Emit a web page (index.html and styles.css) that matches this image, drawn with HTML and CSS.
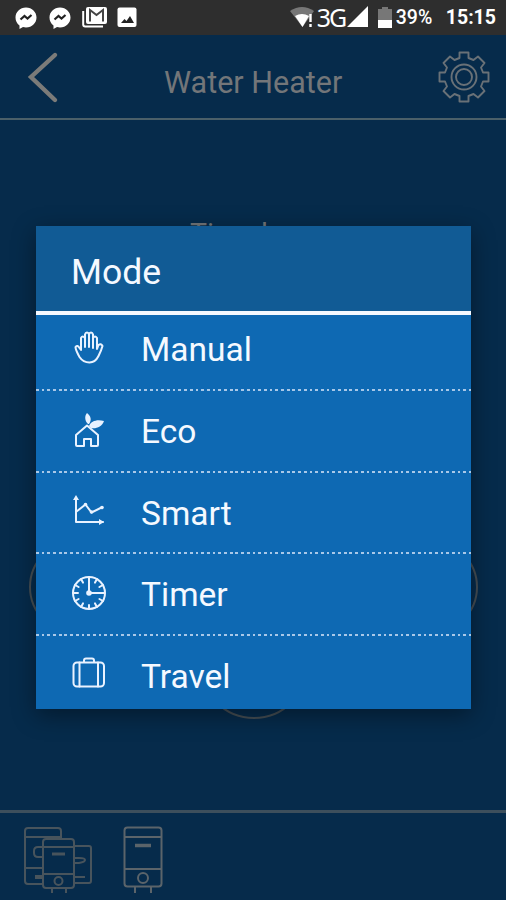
FILE: index.html
```html
<!DOCTYPE html>
<html lang="en">
<head>
  <meta charset="UTF-8" />
  <title>Water Heater</title>
  <link rel="stylesheet" href="styles.css">
</head>
<body>

  <!-- Status bar -->
  <div class="status-bar">
    <div class="notifications">
      <svg width="22" height="23" viewBox="0 0 22 23">
        <path d="M11 0.500C5 .5.5 5 .5 10.500c0 3.500 1.500 6 4 8v3.500l3.500-2c1 .3 2 .5 3 .5 6 0 10.500-4.500 10.500-10S17 .5 11 .5z" fill="#fff"/>
        <path d="M5.500 12.500l4-3.500 3 2.500L16.500 8" fill="none" stroke="#222" stroke-width="2.200"/>
      </svg>
      <svg width="22" height="23" viewBox="0 0 22 23">
        <path d="M11 0.500C5 .5.5 5 .5 10.500c0 3.500 1.500 6 4 8v3.500l3.500-2c1 .3 2 .5 3 .5 6 0 10.500-4.500 10.500-10S17 .5 11 .5z" fill="#fff"/>
        <path d="M5.500 12.500l4-3.500 3 2.500L16.500 8" fill="none" stroke="#222" stroke-width="2.200"/>
      </svg>
      <svg class="mail" width="26" height="22" viewBox="0 0 26 22">
        <path d="M1.200 4v13.500q0 2 2 2H21" fill="none" stroke="#fff" stroke-width="2"/>
        <rect x="4" y="0" width="21" height="17" rx="2" fill="#fff"/>
        <path d="M8 14.500V3l6.500 5L21 3v11.500" fill="none" stroke="#444" stroke-width="2"/>
      </svg>
      <svg class="photo" width="20" height="22" viewBox="0 0 20 22">
        <rect x="0.500" y="0.500" width="19" height="19.500" rx="2" fill="#fff"/>
        <path d="M4 16l3.500-4 2 2 3.500-5 4 7z" fill="#222"/>
      </svg>
    </div>
    <div class="system">
      <svg class="wifi" width="24" height="20" viewBox="0 0 24 20">
        <path d="M0 4Q12-4 24 4L12.500 20z" fill="#777"/>
        <path d="M5 9q7-4 14 0l-6.500 11z" fill="#fff"/>
        <path d="M20.500 7v8M20.500 17v3" stroke="#fff" stroke-width="2.400"/>
      </svg>
      <span class="network">3G</span>
      <svg class="signal" width="21" height="21" viewBox="0 0 21 21"><path d="M21 0v21H0z" fill="#fff"/></svg>
      <svg class="battery" width="14" height="21" viewBox="0 0 14 21">
        <path d="M4 0h6v2h4v19H0V2h4z" fill="#777"/>
        <path d="M0 13h14v8H0z" fill="#fff"/>
      </svg>
      <span class="percent">39%</span>
      <span class="clock">15:15</span>
    </div>
  </div>

  <div class="screen">
    <div class="header">
      <svg class="back" width="32" height="54" viewBox="0 0 32 54">
        <path d="M28 5L4 27l24 23" fill="none" stroke="#7b7b79" stroke-width="4.400" stroke-linecap="round"/>
      </svg>
      <h1>Water Heater</h1>
      <svg class="gear" width="54" height="54" viewBox="-27 -27 54 54" fill="none" stroke="#697177" stroke-width="1.900" stroke-linejoin="round">
        <path d="M-4.500-24.500H4.500V-19L9.500-17L14-20.500L20.500-14L17-9.500L19-4.500H24.500V4.500H19L17 9.500L20.500 14L14 20.500L9.500 17L4.500 19V24.500H-4.500V19L-9.500 17L-14 20.500L-20.500 14L-17 9.500L-19 4.500H-24.500V-4.500H-19L-17-9.500L-20.500-14L-14-20.500L-9.500-17L-4.500-19Z"/>
        <circle r="12.500"/>
        <circle r="8"/>
      </svg>
    </div>

    <div class="main">
      <p class="status">Time le</p>
      <div class="dials">
        <div class="dial"></div>
        <div class="dial"></div>
      </div>
      <div class="power"></div>
    </div>

    <div class="footer">
      <svg width="70" height="70" viewBox="0 0 70 70" fill="none" stroke="#48545c" stroke-width="2">
        <path d="M20 59H5q-3 0-3-3V6q0-3 3-3h30q3 0 3 3v9M2 12h36M2 43h18M20 22h-5q-4 0-4 4v2q0 4 4 4h5"/>
        <path d="M12 52h7" stroke-width="4"/>
        <path d="M51 21h15q2 0 2 2v33q0 2-2 2H51M51 33h5q6 0 6 2t-6 3h-5M51 52h11"/>
        <rect x="20" y="14" width="31" height="49" rx="3"/>
        <path d="M20 22h31M20 49h31M29 63v5M43 63v5"/>
        <path d="M29 29h13" stroke-width="3"/>
        <circle cx="35.500" cy="56" r="4"/>
      </svg>
      <svg class="single" width="40" height="70" viewBox="0 0 40 70" fill="none" stroke="#5b646a" stroke-width="2">
        <rect x="1.500" y="2.500" width="37" height="59" rx="3"/>
        <path d="M2 12h36M2 44h36M12 62v6M28 62v6"/>
        <path d="M12 20.500h16" stroke-width="3.500"/>
        <circle cx="20" cy="53" r="5"/>
      </svg>
    </div>
  </div>

  <!-- Mode popup -->
  <div class="popup" role="dialog" aria-labelledby="popupTitle">
    <h2 id="popupTitle">Mode</h2>
    <ul class="modes">
      <li>
        <svg width="36" height="36" viewBox="0 0 36 36">
          <path d="M8.500 27C7 24 4.500 20 4.500 17q2-2.500 4 1l1.500 2V8q1.500-3 4 0v9V4.500q.5-2 2-2t2 2V17 4.500q.5-2 2-2t2 2V18 8q2-3 4 0v11l1.500-4q2.500-2 4 1c-1 4-2.500 7-4 10s-4 6.500-9 6.500-8-2.500-10-5.500z"/>
        </svg>
        <span>Manual</span>
      </li>
      <li>
        <svg width="36" height="36" viewBox="0 0 36 36">
          <path d="M5 23L16 13.500l11 9.500V33q0 1-1 1h-6v-7h-7v7H6q-1 0-1-1z"/>
          <path class="solid" d="M17 12C13 8 14 3 16 1c4 3 5 7 2 11zM18 14c2-5 8-7 15-5-2 6-8 8-13 7z"/>
        </svg>
        <span>Eco</span>
      </li>
      <li>
        <svg width="36" height="36" viewBox="0 0 36 36">
          <path d="M5 5v24H32M5.500 18.500l9-7 6 8 10-5"/>
          <path class="solid" d="M2 7l3-5 3 5zM28 26l5 3-5 3z"/>
          <circle class="solid" cx="14.500" cy="11.500" r="1.800"/>
          <circle class="solid" cx="20.500" cy="19" r="1.800"/>
          <circle class="solid" cx="31" cy="14.500" r="1.800"/>
        </svg>
        <span>Smart</span>
      </li>
      <li>
        <svg width="36" height="36" viewBox="0 0 36 36">
          <circle cx="18" cy="18" r="16"/>
          <path d="M18 2v16h15M18 30v4M2 18h5M10 4.100l2 3.500M26 4.100l-2 3.500M4.100 10l3.500 2M31.900 10l-3.500 2M4.100 26l3.500-2M31.900 26l-3.500-2M10 31.900l2-3.500M26 31.900l-2-3.500"/>
          <circle class="solid" cx="18" cy="18" r="2.800"/>
        </svg>
        <span>Timer</span>
      </li>
      <li>
        <svg width="36" height="36" viewBox="0 0 36 36">
          <rect x="2.500" y="6.500" width="30.500" height="24" rx="3.500"/>
          <path d="M8.500 6.500v24M27 6.500v24M13 6V4.500q0-2 2-2h6q2 0 2 2V6"/>
        </svg>
        <span>Travel</span>
      </li>
    </ul>
  </div>

</body>
</html>
```
FILE: styles.css
```css
* {
  box-sizing: border-box;
}

body {
  margin: 0;
  width: 506px;
  height: 900px;
  display: flex;
  flex-direction: column;
  position: relative;
  overflow: hidden;
  font-family: Roboto, sans-serif;
  background: #062b4b;
}

svg {
  flex-shrink: 0;
  display: block;
}

/* Status bar */
.status-bar {
  height: 35px;
  display: flex;
  justify-content: space-between;
  background: #2e2e2e;
  color: #fff;
}

.notifications {
  display: flex;
  gap: 12px;
  padding: 7px 0 0 15px;
}

.notifications .mail {
  margin-left: -1px;
}

.notifications .photo {
  margin-left: -3px;
}

.system {
  display: flex;
  padding: 7px 10px 0 0;
  line-height: 22px;
  white-space: nowrap;
}

.wifi {
  margin-right: 3px;
}

.network {
  width: 30px;
  margin-top: -1px;
  font-family: "Noto Sans", sans-serif;
  font-size: 25px;
  letter-spacing: -2px;
}

.signal {
  margin-top: -1px;
}

.battery {
  margin: 0 4px 0 10px;
}

.percent {
  width: 50px;
  font-size: 19.5px;
  font-weight: 500;
}

.clock {
  font-size: 19.5px;
  font-weight: 700;
}

/* Dimmed screen */
.screen {
  flex: 1;
  display: flex;
  flex-direction: column;
  color: #737679;
}

.header {
  height: 85px;
  display: flex;
  padding: 15px 15px 0 27px;
  border-bottom: 2px solid #4b6069;
}

h1 {
  flex: 1;
  margin: 15px 0 0 105px;
  font-size: 30.5px;
  font-weight: 400;
  line-height: 36px;
  white-space: nowrap;
}

.main {
  flex: 1;
  display: flex;
  flex-direction: column;
  align-items: center;
}

.status {
  height: 328px;
  margin: 96px 0 0;
  width: 126px;
  font-size: 28.5px;
  line-height: 36px;
  white-space: nowrap;
}

.dials {
  width: 449px;
  display: flex;
  justify-content: space-between;
  margin: -4px 0 0 1px;
}

.dial {
  width: 94px;
  height: 94px;
  border: 2px solid #454e54;
  border-radius: 50%;
}

.power {
  width: 108px;
  height: 108px;
  margin: -23px 0 0 1px;
  border: 2px solid #454e54;
  border-radius: 50%;
}

.footer {
  height: 90px;
  display: flex;
  padding: 12px 0 0 23px;
  border-top: 3px solid #3d4f5c;
}

.footer .single {
  margin-left: 30px;
}

/* Mode popup */
.popup {
  position: absolute;
  left: 36px;
  top: 226px;
  width: 435px;
  height: 483px;
  overflow: hidden;
  background: #0e69b3;
  color: #f5f9ff;
  box-shadow: 0 6px 22px rgba(0,0,0,0.4);
}

h2 {
  height: 89px;
  margin: 0;
  padding: 24px 35px 0;
  font-size: 35.5px;
  font-weight: 400;
  line-height: 44px;
  background: #115b95;
  border-bottom: 4px solid #f4f8ff;
}

.modes {
  list-style: none;
  margin: 0;
  padding: 0;
}

.modes li {
  height: 81.5px;
  display: flex;
  align-items: center;
  gap: 35px;
  padding: 0 34px;
  font-size: 33.5px;
  background: repeating-linear-gradient(90deg, #a9c8e8 0 2.7px, transparent 2.7px 5.7px) left bottom / 100% 2px no-repeat;
}

.modes li:first-child {
  height: 76px;
  padding-bottom: 7px;
}

.modes svg {
  margin: -4px 0 0 1px;
  fill: none;
  stroke: #e9f2ff;
  stroke-width: 2;
  stroke-linejoin: round;
  stroke-linecap: round;
}

.modes svg + span {
  margin-left: -1px;
}

.modes .solid {
  fill: #e9f2ff;
  stroke: none;
}
```
